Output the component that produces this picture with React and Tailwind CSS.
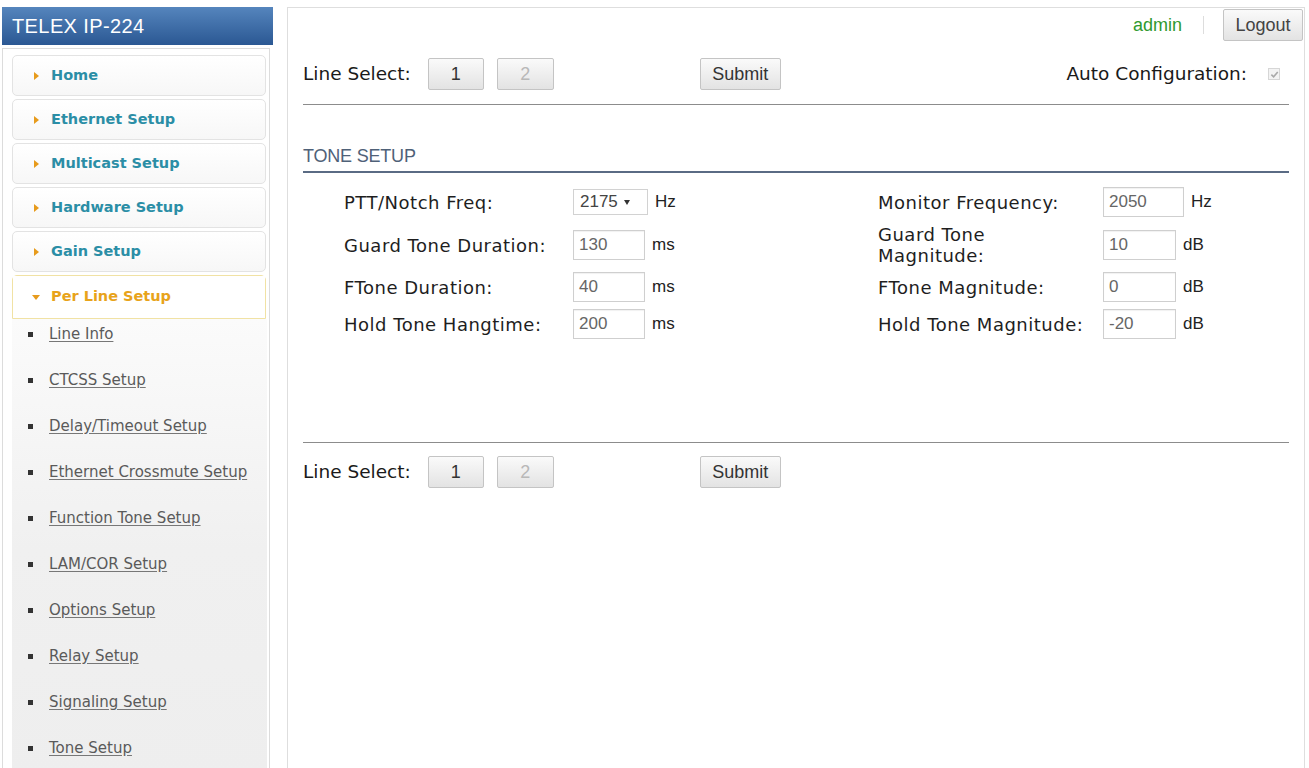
import React from 'react'

const navItems = ['Home', 'Ethernet Setup', 'Multicast Setup', 'Hardware Setup', 'Gain Setup']
const subItems = [
  'Line Info',
  'CTCSS Setup',
  'Delay/Timeout Setup',
  'Ethernet Crossmute Setup',
  'Function Tone Setup',
  'LAM/COR Setup',
  'Options Setup',
  'Relay Setup',
  'Signaling Setup',
  'Tone Setup',
]

function Btn({ children, className = '', disabled }) {
  return (
    <button
      className={`h-[32px] border border-[#c4c4c4] rounded-[2px] bg-gradient-to-b from-[#fafafa] to-[#e3e3e3] font-['Liberation_Sans',Arial,sans-serif] text-[18px] ${disabled ? 'text-[#b8b8b8]' : 'text-[#333]'} ${className}`}
    >
      {children}
    </button>
  )
}

function LineSelect({ right }) {
  return (
    <div className="flex items-center">
      <span className="font-['DejaVu_Sans',Verdana,sans-serif] text-[18.5px] text-[#1a1a1a]">Line Select:</span>
      <Btn className="ml-[17px] w-[56px]">1</Btn>
      <Btn className="ml-[13px] w-[57px]" disabled>2</Btn>
      <Btn className="ml-[146px] w-[81px]">Submit</Btn>
      {right}
    </div>
  )
}

function Field({ value, w = 'w-[72px]' }) {
  return (
    <div className={`h-[30px] ${w} border border-[#cfcfcf] shadow-[inset_0_1px_1px_rgba(0,0,0,0.06)] bg-white flex items-center pl-[5px] font-['Liberation_Sans',Arial,sans-serif] text-[17px] text-[#666]`}>
      {value}
    </div>
  )
}

function Row({ label, field, unit, mt = '' }) {
  return (
    <div className={`flex items-center h-[30px] ${mt}`}>
      <div className="font-['DejaVu_Sans',Verdana,sans-serif] text-[18px] leading-[21px] tracking-[0.5px] text-[#1e1e1e]">{label}</div>
      {field}
      <span className="ml-[7px] font-['Liberation_Sans',Arial,sans-serif] text-[17px] text-[#222]">{unit}</span>
    </div>
  )
}

export default function App() {
  return (
    <div className="flex min-h-[768px] bg-white overflow-hidden">
      {/* Sidebar */}
      <aside className="w-[273px] shrink-0 pt-[7px] pl-[2px]">
        <div className="h-[38px] bg-gradient-to-b from-[#5585bd] to-[#2b5893] text-white flex items-center pl-[10px] font-['Liberation_Sans',Arial,sans-serif] text-[20px] tracking-[0.4px]">
          TELEX IP-224
        </div>
        <div className="mt-[3px] mr-[3px] border border-[#dcdcdc] pt-[6px] pl-[9px] pr-[3px] min-h-[730px]">
          {navItems.map(item => (
            <div
              key={item}
              className="h-[41px] mb-[3px] border border-[#e3e3e3] rounded-[5px] bg-gradient-to-b from-white to-[#f7f7f7] flex items-center pl-[21px]"
            >
              <span className="w-0 h-0 border-y-[4px] border-y-transparent border-l-[5px] border-l-[#e79b1c]"></span>
              <span className="ml-[12px] font-['DejaVu_Sans',Verdana,sans-serif] font-bold text-[14.5px] text-[#2b8ea6]">{item}</span>
            </div>
          ))}
          <div className="border border-[#f1e2a4] rounded-t-[5px]">
            <div className="h-[42px] bg-white flex items-center pl-[19px]">
              <span className="w-0 h-0 border-x-[4px] border-x-transparent border-t-[5px] border-t-[#e79b1c]"></span>
              <span className="ml-[11px] font-['DejaVu_Sans',Verdana,sans-serif] font-bold text-[14.5px] text-[#e8a31a]">Per Line Setup</span>
            </div>
          </div>
          <ul className="bg-gradient-to-b from-[#fbfbfb] via-[#f0f0f0] to-[#eeeeee] -mr-[1px]">
            {subItems.map(s => (
              <li key={s} className="h-[46px] flex items-start pt-[5px] pl-[16px]">
                <div className="h-[20px] flex items-center">
                  <span className="w-[5px] h-[5px] bg-[#333]"></span>
                  <a className="ml-[16px] font-['DejaVu_Sans',Verdana,sans-serif] text-[15px] text-[#5a5a5a] underline underline-offset-2 decoration-[#777]">
                    {s}
                  </a>
                </div>
              </li>
            ))}
          </ul>
        </div>
      </aside>

      {/* Main */}
      <main className="flex-1 mt-[7px] ml-[14px] mr-[4px] border-l border-t border-r border-[#dedede] min-h-[761px]">
        <div className="flex items-center justify-end h-[32px] pt-[2px] pr-[1px]">
          <span className="font-['Liberation_Sans',Arial,sans-serif] text-[18px] text-[#2f9a2f]">admin</span>
          <span className="ml-[21px] w-px h-[18px] bg-[#dddddd]"></span>
          <Btn className="ml-[19px] w-[80px] h-[30px] text-[#444]">Logout</Btn>
        </div>

        <div className="px-[15px]">
          <div className="mt-[18px]">
            <LineSelect
              right={
                <div className="ml-auto mr-[9px] flex items-center">
                  <span className="font-['DejaVu_Sans',Verdana,sans-serif] text-[18.5px] text-[#1a1a1a]">Auto Configuration:</span>
                  <span className="ml-[21px] w-[12px] h-[12px] border border-[#d6d6d6] bg-[#f3f3f3] flex items-center justify-center">
                    <svg width="9" height="9" viewBox="0 0 10 10">
                      <path d="M1.5 5.2 L4 7.6 L8.6 2.2" fill="none" stroke="#a9a9a9" strokeWidth="1.8" />
                    </svg>
                  </span>
                </div>
              }
            />
          </div>
          <div className="mt-[14px] border-t border-[#8c8c8c]"></div>

          <div className="mt-[40px] font-['Liberation_Sans',Arial,sans-serif] text-[18px] leading-[22px] text-[#4f6178] tracking-[-0.2px]">
            TONE SETUP
          </div>
          <div className="mt-[4px] border-t-2 border-[#5a6b84]"></div>

          <div className="mt-[14px] pl-[41px] flex">
            <div className="w-[534px]">
              <Row label={<span className="inline-block w-[229px]">PTT/Notch Freq:</span>}
                field={
                  <div className="h-[26px] w-[75px] border border-[#d2d2d2] bg-white flex items-center pl-[6px] font-['Liberation_Sans',Arial,sans-serif] text-[17px] text-[#444]">
                    2175
                    <span className="ml-[6px] w-0 h-0 border-x-[3px] border-x-transparent border-t-[5px] border-t-[#333]"></span>
                  </div>
                }
                unit="Hz" />
              <Row mt="mt-[13px]" label={<span className="inline-block w-[229px]">Guard Tone Duration:</span>} field={<Field value="130" />} unit="ms" />
              <Row mt="mt-[12px]" label={<span className="inline-block w-[229px]">FTone Duration:</span>} field={<Field value="40" />} unit="ms" />
              <Row mt="mt-[7px]" label={<span className="inline-block w-[229px]">Hold Tone Hangtime:</span>} field={<Field value="200" />} unit="ms" />
            </div>
            <div>
              <Row label={<span className="inline-block w-[225px]">Monitor Frequency:</span>} field={<Field value="2050" w="w-[81px]" />} unit="Hz" />
              <Row mt="mt-[13px]" label={<span className="inline-block w-[225px]">Guard Tone<br />Magnitude:</span>} field={<Field value="10" w="w-[73px]" />} unit="dB" />
              <Row mt="mt-[12px]" label={<span className="inline-block w-[225px]">FTone Magnitude:</span>} field={<Field value="0" w="w-[73px]" />} unit="dB" />
              <Row mt="mt-[7px]" label={<span className="inline-block w-[225px]">Hold Tone Magnitude:</span>} field={<Field value="-20" w="w-[73px]" />} unit="dB" />
            </div>
          </div>

          <div className="mt-[103px] border-t border-[#8c8c8c]"></div>
          <div className="mt-[13px]">
            <LineSelect />
          </div>
        </div>
      </main>
    </div>
  )
}
